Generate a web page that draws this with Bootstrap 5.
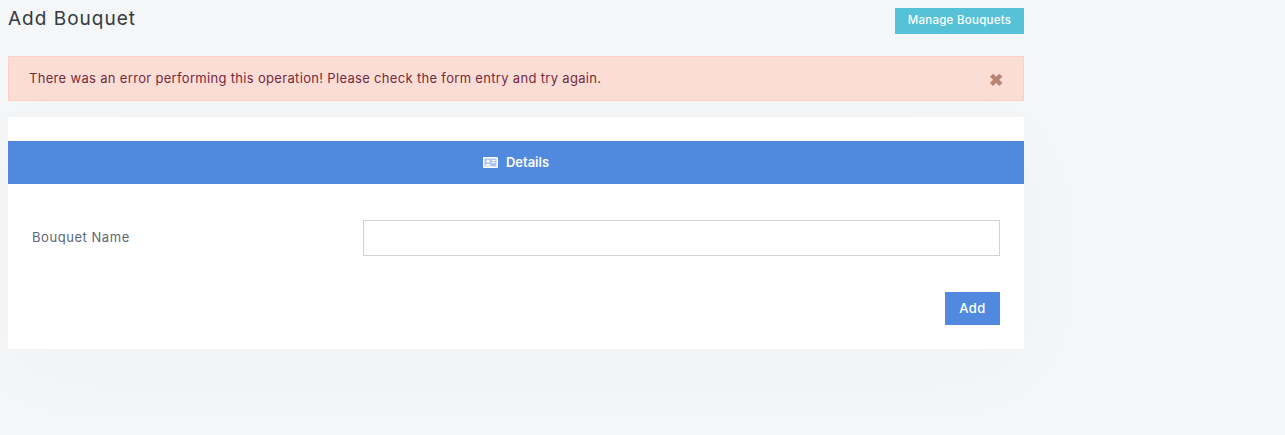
<!DOCTYPE html>
<html lang="en">
<head>
    <meta charset="UTF-8">
    <meta name="viewport" content="width=device-width, initial-scale=1.0">
    <title>Add Bouquet</title>
    <link href="https://cdn.jsdelivr.net/npm/bootstrap@5.3.0/dist/css/bootstrap.min.css" rel="stylesheet">
    <style>
        body {
            background: #f4f6f8;
            font-family: Inter, "Liberation Sans", sans-serif;
            font-size: 13px;
            min-height: 100vh;
        }
        .page-wrap {
            width: 1016px;
            margin-left: 8px;
            padding-top: 8px;
        }
        .page-head {
            height: 48px;
        }
        .page-title {
            font-size: 19px;
            font-weight: 400;
            line-height: 22px;
            letter-spacing: 1px;
            color: #343a40;
            margin: 0;
        }
        .btn-manage {
            width: 129px;
            height: 26px;
            padding: 0;
            border: 0;
            border-radius: 0;
            background: #55c2d7;
            color: #fff;
            font-size: 11.5px;
            font-weight: 500;
            letter-spacing: .27px;
        }
        .error-box {
            height: 45px;
            margin-bottom: 16px;
            padding: 0 21px 0 20px;
            background: #fcddd6;
            border: 1px solid #fcd0c4;
            border-radius: 0;
            color: #742b3a;
            font-size: 13px;
            letter-spacing: .32px;
        }
        .error-close {
            color: #b98277;
            font-size: 17px;
            font-weight: 700;
            line-height: 1;
            padding: 4px 0 0;
            border: 0;
            background: none;
            margin-right: -1px;
        }
        .form-panel {
            height: 232px;
            padding-top: 24px;
            background: #fff;
            border: 0;
            border-radius: 0;
            box-shadow: 0 20px 100px rgba(30, 40, 60, .025);
        }
        .panel-bar {
            height: 43px;
            background: #5189df;
            color: #fff;
            font-size: 13px;
            font-weight: 600;
            gap: 8px;
        }
        .panel-body {
            padding: 36px 24px 24px;
        }
        .field-label {
            flex: 0 0 331px;
            color: #5c6678;
            font-size: 13px;
            letter-spacing: .55px;
            margin: 0;
        }
        .field-input {
            height: 36px;
            border: 1px solid #d0d2d6;
            border-radius: 0;
        }
        .btn-add {
            width: 55px;
            height: 33px;
            margin-top: 36px;
            padding: 0;
            border: 0;
            border-radius: 0;
            background: #5189df;
            color: #fff;
            font-size: 13px;
            font-weight: 500;
            letter-spacing: .4px;
        }
    </style>
</head>
<body>

<div class="page-wrap">
    <div class="page-head d-flex justify-content-between align-items-start">
        <h1 class="page-title">Add Bouquet</h1>
        <button type="button" class="btn btn-manage">Manage Bouquets</button>
    </div>

    <div class="error-box d-flex justify-content-between align-items-center">
        <span>There was an error performing this operation! Please check the form entry and try again.</span>
        <button type="button" class="error-close" aria-label="Close">&#10006;</button>
    </div>

    <div class="card form-panel">
        <div class="panel-bar d-flex justify-content-center align-items-center">
            <svg width="15" height="11" viewBox="0 0 15 11" aria-hidden="true">
                <rect width="15" height="11" rx="1" fill="#fff"/>
                <rect x="1.5" y="1.5" width="12" height="8" fill="#a9c5ef"/>
                <circle cx="5" cy="4.2" r="1.6" fill="#fff"/>
                <path d="M2.4 8.8c0-2.8 5.2-2.8 5.2 0z" fill="#fff"/>
                <path d="M8.8 3.5h3.5M8.8 5.5h3.5" stroke="#fff"/>
            </svg>
            <span>Details</span>
        </div>
        <form class="panel-body">
            <div class="d-flex align-items-center">
                <label class="field-label" for="bouquet-name">Bouquet Name</label>
                <input type="text" id="bouquet-name" class="form-control field-input flex-grow-1">
            </div>
            <div class="d-flex justify-content-end">
                <button type="submit" class="btn btn-add">Add</button>
            </div>
        </form>
    </div>
</div>

<script src="https://cdn.jsdelivr.net/npm/bootstrap@5.3.0/dist/js/bootstrap.bundle.min.js"></script>
</body>
</html>
